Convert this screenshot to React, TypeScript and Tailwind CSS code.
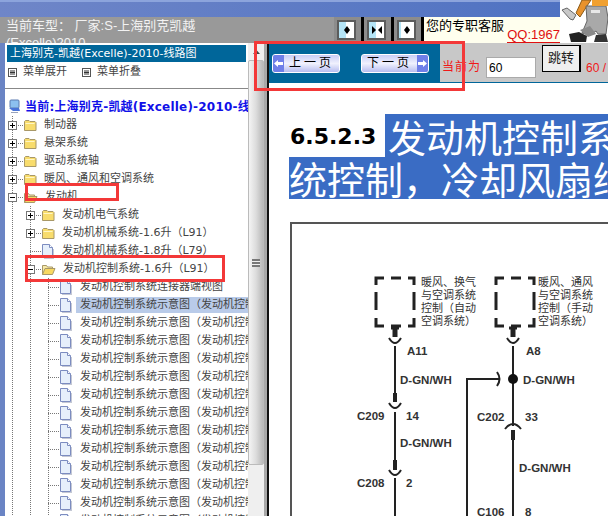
const SANS = "font-['DejaVu_Sans','Noto_Sans_CJK_SC',sans-serif]";

type RowProps = {
  depth: number;
  label: string;
  kind?: 'folder' | 'open' | 'file';
  expander?: 'plus' | 'minus';
  selected?: boolean;
};

const DIAGRAM_ROW = '发动机控制系统示意图（发动机控制系统示意图）';

const ROWS: RowProps[] = [
  { depth: 0, label: '制动器', expander: 'plus' },
  { depth: 0, label: '悬架系统', expander: 'plus' },
  { depth: 0, label: '驱动系统轴', expander: 'plus' },
  { depth: 0, label: '暖风、通风和空调系统', expander: 'plus' },
  { depth: 0, label: '发动机', expander: 'minus', kind: 'open' },
  { depth: 1, label: '发动机电气系统', expander: 'plus' },
  { depth: 1, label: '发动机机械系统-1.6升（L91）', expander: 'plus' },
  { depth: 1, label: '发动机机械系统-1.8升（L79）', kind: 'file' },
  { depth: 1, label: '发动机控制系统-1.6升（L91）', expander: 'minus', kind: 'open' },
  { depth: 2, label: '发动机控制系统连接器端视图', kind: 'file' },
  { depth: 2, label: DIAGRAM_ROW, kind: 'file', selected: true },
  ...Array.from({ length: 12 }, () => ({ depth: 2, label: DIAGRAM_ROW, kind: 'file' as const })),
];

function Guide() {
  return (
    <svg width="18" height="18" className="shrink-0">
      <line x1="9.5" y1="0" x2="9.5" y2="18" stroke="#777" strokeDasharray="1 1" />
    </svg>
  );
}

function Node({ expander }: { expander?: 'plus' | 'minus' }) {
  return (
    <svg width="20" height="18" className="shrink-0">
      <line x1="9.5" y1="0" x2="9.5" y2="18" stroke="#777" strokeDasharray="1 1" />
      <line x1="9" y1="9.5" x2="20" y2="9.5" stroke="#777" strokeDasharray="1 1" />
      {expander && (
        <>
          <rect x="5.5" y="5.5" width="8" height="8" fill="#fff" stroke="#777" />
          <line x1="7" y1="9.5" x2="12" y2="9.5" stroke="#000" />
          {expander === 'plus' && <line x1="9.5" y1="7" x2="9.5" y2="12" stroke="#000" />}
        </>
      )}
    </svg>
  );
}

function TreeIcon({ kind }: { kind: 'folder' | 'open' | 'file' }) {
  if (kind === 'file') {
    return (
      <svg width="14" height="16" className="shrink-0">
        <path d="M1.5 1.5h7l3 3v10h-10z" fill="#e6effb" stroke="#7c8cc0" />
        <path d="M8.5 1.5v3h3" fill="#fff" stroke="#7c8cc0" />
        <path d="M3 15.5h10M12.5 6v9" stroke="#c4c8d4" />
      </svg>
    );
  }
  if (kind === 'open') {
    return (
      <svg width="15" height="14" className="shrink-0">
        <path d="M1.5 12.5v-9h4l1 1.500h5v2" fill="#f6e9a8" stroke="#a89868" />
        <path d="M1.500 12.500l2.500-6h10l-2.500 6z" fill="#f8d860" stroke="#a89868" />
      </svg>
    );
  }
  return (
    <svg width="14" height="14" className="shrink-0">
      <path d="M1.500 12.500v-9l1-1h3.500l1 1h5l1 1v8z" fill="#f8dc6c" stroke="#a89868" />
      <path d="M2.500 5.500h9" stroke="#fff6c4" />
    </svg>
  );
}

function TreeRow({ depth, label, kind = 'folder', expander, selected }: RowProps) {
  return (
    <div className="flex h-[18px] items-center">
      {Array.from({ length: depth }, (_, i) => (
        <Guide key={i} />
      ))}
      <Node expander={expander} />
      <TreeIcon kind={kind} />
      <span
        className={`whitespace-nowrap text-[11px] leading-[16px] text-[#444] ${selected ? 'ml-[3px] flex-1 bg-[#b9cbe9] pl-[4px]' : 'ml-[6px] pl-[1px]'}`}
      >
        {label}
      </span>
    </div>
  );
}

function PageButton({ label, dir }: { label: string; dir: 'prev' | 'next' }) {
  const arrow = (
    <div className="flex h-full w-[11px] items-center justify-center bg-[#6f7fe8]">
      <svg width="9" height="9" viewBox="0 0 9 9">
        <path d={dir === 'prev' ? 'M0 4.500L4 1v2h5v3H4v2z' : 'M9 4.500L5 1v2H0v3h5v2z'} fill="#fff" />
      </svg>
    </div>
  );
  return (
    <div className="flex h-[19px] w-[68px] items-center overflow-hidden rounded-[3px] border border-white bg-gradient-to-b from-[#c9cdf6] via-[#f0f1fd] to-[#b8bdf0]">
      {dir === 'prev' && arrow}
      <span className="flex-1 text-center text-[12px] leading-none tracking-[3px] text-black">{label}</span>
      {dir === 'next' && arrow}
    </div>
  );
}

function NavButton({ arrows, left }: { arrows: string; left: string }) {
  return (
    <div className="flex h-[26px] w-[30px] items-center border-r-[3px] border-black bg-[#8c8c8c] pl-[3px]">
      <div className={`flex h-[20px] w-[19px] items-center justify-center border-[2px] border-[#5c5c5c] ${left}`}>
        <svg width="14" height="10" viewBox="0 0 14 10">
          <path d={arrows} fill="#000" />
        </svg>
      </div>
    </div>
  );
}

function Mascot() {
  return (
    <svg width="48" height="43" viewBox="560 0 48 43" className="shrink-0 bg-white">
      <path d="M562 10l5-2 9 7-3 5-3-1z" fill="#c8c8c8" stroke="#666" />
      <path d="M576 13l6-13h9l-4 6-7 11z" fill="#e8922c" stroke="#8a5a18" />
      <path d="M586 6h20l2 12-2 16h-8l-2-3-6 4-8-2 5-12z" fill="#a9a9a9" stroke="#666" />
      <path d="M592 0h16v6h-16z" fill="#f0a030" />
      <path d="M591 10h9v3h-9z" fill="#e8e8e8" />
      <path d="M580 30l10-4 6 8-8 3z" fill="#8a8a8a" />
      <path d="M569 34l10-2 8 4-1 6h-15z" fill="#222" />
      <path d="M596 35l10-1 2 8h-14z" fill="#333" />
    </svg>
  );
}

function DashedBox({ x }: { x: number }) {
  const r = x + 38;
  return (
    <path
      d={`M${x} 285v-7h8M${x + 15} 278h10M${r - 6} 278h6v7M${x} 292v18M${r} 292v18M${x} 318v8h8M${x + 15} 326h10M${r - 6} 326h6v-8`}
      fill="none"
      stroke="#222"
      strokeWidth="3"
    />
  );
}

function Diagram() {
  const label = "text-[11px] fill-[#333] font-['Noto_Sans_CJK_SC',sans-serif]";
  const code = "text-[11.5px] font-bold fill-[#333] font-['Liberation_Sans',sans-serif]";
  const wire = { stroke: '#222', strokeWidth: 2, fill: 'none' };
  const arcDown = (x: number, y: number) => `M${x - 6} ${y}q6 10 12 0`;
  return (
    <svg width="320" height="292" viewBox="292 224 320 292" className="block">
      <DashedBox x={376} />
      <DashedBox x={496} />

      <path d="M391 328h8" stroke="#222" strokeWidth="3" />
      <path d="M395 328v9" stroke="#222" strokeWidth="5" />
      <path d={arcDown(395, 338)} {...wire} />
      <path d="M395 346v49M395 412v48M395 478v40" {...wire} />
      <path d="M395 393v9M395 460v10" stroke="#222" strokeWidth="4" />
      <path d={arcDown(395, 403)} {...wire} />
      <path d={arcDown(395, 470)} {...wire} />

      <path d="M509 328h8" stroke="#222" strokeWidth="3" />
      <path d="M513 328v9" stroke="#222" strokeWidth="5" />
      <path d={arcDown(513, 338)} {...wire} />
      <path d="M513 346v80M513 440v78" {...wire} />
      <circle cx="513" cy="379" r="5" fill="#111" />
      <path d="M505 429q8 -10 16 0" {...wire} />
      <path d="M513 430v10" stroke="#222" strokeWidth="4" />
      <path d="M467 518V379h32" {...wire} />
      <path d="M497 372q5 7 0 14" {...wire} />

      <text x="421" y="286" className={label}>暖风、换气</text>
      <text x="421" y="299" className={label}>与空调系统</text>
      <text x="421" y="312" className={label}>控制（自动</text>
      <text x="421" y="325" className={label}>空调系统）</text>
      <text x="538" y="286" className={label}>暖风、通风</text>
      <text x="538" y="299" className={label}>与空调系统</text>
      <text x="538" y="312" className={label}>控制（手动</text>
      <text x="538" y="325" className={label}>空调系统）</text>

      <text x="407" y="355" className={code}>A11</text>
      <text x="400" y="384" className={code}>D-GN/WH</text>
      <text x="357" y="420" className={code}>C209</text>
      <text x="406" y="420" className={code}>14</text>
      <text x="400" y="447" className={code}>D-GN/WH</text>
      <text x="357" y="487" className={code}>C208</text>
      <text x="406" y="487" className={code}>2</text>
      <text x="526" y="355" className={code}>A8</text>
      <text x="523" y="384" className={code}>D-GN/WH</text>
      <text x="477" y="421" className={code}>C202</text>
      <text x="525" y="421" className={code}>33</text>
      <text x="519" y="472" className={code}>D-GN/WH</text>
      <text x="477" y="516" className={code}>C106</text>
      <text x="525" y="516" className={code}>8</text>
    </svg>
  );
}

function MenuGlyph() {
  return (
    <svg width="9" height="9" className="shrink-0">
      <rect x="0.500" y="0.500" width="8" height="8" fill="#fff" stroke="#555" />
      <path d="M2 3h5M2 4.500h5M2 6h5" stroke="#333" />
    </svg>
  );
}

export default function App() {
  return (
    <div className="relative h-[516px] w-[608px] overflow-hidden bg-white font-['Liberation_Sans','Noto_Sans_CJK_SC',sans-serif]">
      {/* Header */}
      <div className="flex h-[43px]">
        <div className="w-[560px]">
          <div className="h-[17px] border-t-2 border-[#8ca4dc] bg-gradient-to-r from-[#6f86c8] to-[#4f72c2]" />
          <div className="flex h-[26px] overflow-hidden">
            <div className="h-[26px] w-[334px] overflow-hidden bg-[#999] pl-[6px]">
              <div className="w-[200px] text-[13px] leading-[17px] text-[#f2f2f2]">当前车型： 厂家:S-上海别克凯越 (Excelle)2010</div>
            </div>
            <NavButton left="bg-[linear-gradient(90deg,#b4e4f6_50%,#fff_50%)]" arrows="M7 1L4 5l3 4zM7 1l3 4-3 4z" />
            <NavButton left="bg-[linear-gradient(90deg,#b4e4f6_50%,#fff_50%)]" arrows="M2 1l4 4-4 4zM12 1L8 5l4 4z" />
            <NavButton left="bg-[linear-gradient(90deg,#b4e4f6_15%,#fff_15%)]" arrows="M7 1L4 5l3 4zM7 1l3 4-3 4z" />
            <div className="relative flex-1 bg-[#ffffee] pl-[2px]">
              <span className="block text-[13px] leading-[17px] text-black">您的专职客服</span>
              <span className="absolute right-0 top-[10px] border-b border-[#e01010] text-[13px] leading-[15px] text-[#e01010]">QQ:1967</span>
            </div>
          </div>
        </div>
        <Mascot />
      </div>

      {/* Body */}
      <div className="flex h-[473px]">
        <div className="w-[5px] bg-[#6a84c4]" />

        {/* Tree panel */}
        <div className={`w-[243px] overflow-hidden bg-white ${SANS}`}>
          <div className="mx-[2px] mt-[2px] h-[17px] whitespace-nowrap bg-[#00669a] pl-[3px] text-[11px] leading-[17px] text-white">
            上海别克-凯越(Excelle)-2010-线路图
          </div>
          <div className="flex h-[27px] items-center border-b border-[#888] pb-[5px] pl-[3px] text-[11px] text-[#444]">
            <MenuGlyph />
            <span className="ml-[6px] w-[59px]">菜单展开</span>
            <MenuGlyph />
            <span className="ml-[6px]">菜单折叠</span>
          </div>
          <div className="pt-[8px]">
            <div className="flex h-[19px] items-center pl-[3px]">
              <svg width="13" height="15" viewBox="0 0 13 15" className="shrink-0">
                <rect x="2" y="1" width="9" height="8" rx="1" fill="#8cc0f0" stroke="#5a7ab0" />
                <path d="M1 9l4 3h7l-1-3z" fill="#4a74d8" />
                <path d="M3 13h7v1H3z" fill="#9aa4bc" />
              </svg>
              <span className="ml-[4px] whitespace-nowrap text-[12px] font-bold tracking-[0.2px] text-[#1010e8]">
                当前:上海别克-凯越(Excelle)-2010-线路图
              </span>
            </div>
            <div className="-ml-[2px]">
              {ROWS.map((row, i) => (
                <TreeRow key={i} {...row} />
              ))}
            </div>
          </div>
        </div>

        {/* Scrollbar */}
        <div className="flex w-[16px] flex-col bg-[#efefef]">
          <div className="flex h-[17px] items-center justify-center">
            <svg width="7" height="4">
              <path d="M3.500 0L7 4H0z" fill="#444" />
            </svg>
          </div>
          <div className="flex h-[405px] items-center justify-center rounded-[2px] border border-[#bbb] bg-gradient-to-r from-[#f4f4f4] via-[#dcdcdc] to-[#b8b8b8]">
            <div className="h-[8px] w-[8px] border-y-2 border-[#777] bg-[#eee] py-[1px]">
              <div className="h-[2px] bg-[#777]" />
            </div>
          </div>
        </div>
        <div className="w-[3px] bg-[#a8a8a8]" />
        <div className="w-[2px] bg-[#111]" />

        {/* Main */}
        <div className="flex min-w-0 flex-1 flex-col overflow-hidden bg-white">
          <div className="flex h-[40px] shrink-0 border-b border-[#00669a]">
            <div className="flex w-[171px] shrink-0 items-center gap-[21px] bg-[#00669a] pl-[3px] pt-[1px]">
              <PageButton label="上一页" dir="prev" />
              <PageButton label="下一页" dir="next" />
            </div>
            <div className="flex min-w-0 flex-1 items-start overflow-hidden whitespace-nowrap bg-[#c8c8c8] pl-[2px]">
              <span className="mt-[16px] text-[12px] leading-[16px] tracking-[1px] text-[#f01818]">当前为</span>
              <div className="ml-[5px] mt-[14px] h-[21px] w-[50px] shrink-0 border border-[#aaa] bg-white pl-[2px] text-[12px] leading-[20px] text-black">60</div>
              <div className="ml-[6px] mt-[2px] h-[27px] w-[39px] shrink-0 border-y border-l border-r-2 border-black bg-[#efefef] text-center text-[13px] leading-[24px] text-[#222]">跳转</div>
              <span className="ml-[5px] mt-[17px] text-[12px] leading-[16px] text-[#f01818]">60 / 120</span>
            </div>
          </div>

          {/* Page */}
          <div className="h-[31px] shrink-0" />
          <div className="flex h-[43px] shrink-0 items-center whitespace-nowrap pl-[21px]">
            <span className="mt-[2px] w-[95px] shrink-0 font-['DejaVu_Sans',sans-serif] text-[22px] font-bold leading-none text-black">6.5.2.3</span>
            <div className="flex h-[43px] min-w-0 flex-1 items-center overflow-hidden bg-[#3a6cc4] pl-[3px] font-['Noto_Sans_CJK_SC',sans-serif] text-[38px] leading-none text-white">
              发动机控制系统
            </div>
          </div>
          <div className="ml-[20px] flex h-[42px] w-[340px] shrink-0 items-center overflow-hidden whitespace-nowrap bg-[#3a6cc4] font-['Noto_Sans_CJK_SC',sans-serif] text-[38px] leading-none text-white">
            统控制，冷却风扇继
          </div>
          <div className="ml-[21px] mt-[23px] min-h-0 w-[340px] flex-1 border-l-2 border-t-2 border-[#555]">
            <Diagram />
          </div>
        </div>
      </div>

      {/* Red annotations */}
      <div className="absolute left-[254px] top-[41px] h-[50px] w-[211px] border-[3px] border-[#f33838]" />
      <div className="absolute left-[25px] top-[183px] h-[18px] w-[94px] border-[3px] border-[#f33838]" />
      <div className="absolute left-[25px] top-[255px] h-[27px] w-[200px] border-[3px] border-[#f33838]" />
    </div>
  );
}
